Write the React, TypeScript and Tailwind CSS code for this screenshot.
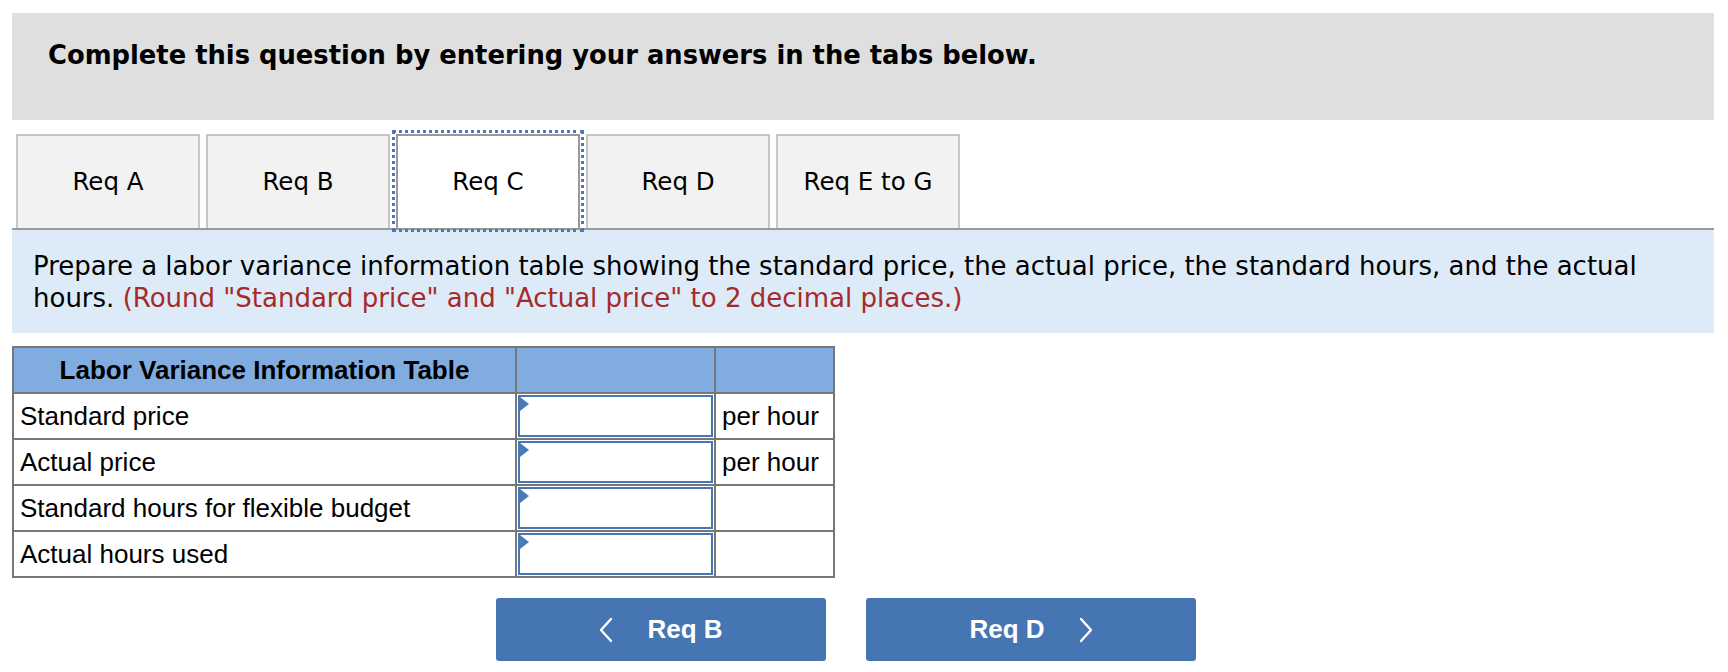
const tabs = ['Req A', 'Req B', 'Req C', 'Req D', 'Req E to G'];

const rows = [
  { label: 'Standard price', unit: 'per hour' },
  { label: 'Actual price', unit: 'per hour' },
  { label: 'Standard hours for flexible budget', unit: '' },
  { label: 'Actual hours used', unit: '' },
];

function AnswerInput() {
  return (
    <div className="relative h-full w-full p-[1px]">
      <input
        type="text"
        className="h-full w-full border-2 border-[#4676b6] bg-white outline-none"
      />
      {/* little flag in the corner */}
      <span className="absolute left-[3px] top-[3px] h-0 w-0 border-y-[7px] border-l-[9px] border-y-transparent border-l-[#4a7ab8]" />
    </div>
  );
}

function Chevron({ dir }: { dir: 'left' | 'right' }) {
  return (
    <svg width="14" height="26" viewBox="0 0 14 26" fill="none" stroke="white" strokeWidth="2.4" strokeLinecap="round" strokeLinejoin="round">
      {dir === 'left' ? <polyline points="12,2 2,13 12,24" /> : <polyline points="2,2 12,13 2,24" />}
    </svg>
  );
}

export default function App() {
  return (
    <div className="min-h-[672px] w-full bg-white font-['DejaVu_Sans',Verdana,sans-serif] text-black">
      <div className="ml-[12px] w-[1702px] pt-[13px]">
        {/* Instruction banner */}
        <div className="h-[107px] bg-[#dfdfdf] pl-[36px] pt-[26px]">
          <p className="text-[25.8px] font-bold leading-[32px]">
            Complete this question by entering your answers in the tabs below.
          </p>
        </div>

        {/* Tabs */}
        <div className="mt-[14px] flex gap-[6px] border-b-2 border-[#999999] pl-[4px]">
          {tabs.map((tab) => {
            const active = tab === 'Req C';
            return (
              <button
                key={tab}
                className={
                  active
                    ? 'flex h-[94px] w-[184px] items-center justify-center border-2 border-b-0 border-[#999999] bg-white text-[24.5px] outline-[3px] outline-offset-[1px] outline-dotted outline-[#4a78b8]'
                    : 'flex h-[94px] w-[184px] items-center justify-center border-2 border-b-0 border-[#c6c6c6] bg-[#f2f2f2] text-[24.5px]'
                }
              >
                {tab}
              </button>
            );
          })}
        </div>

        {/* Question text */}
        <div className="h-[103px] bg-[#ddebf8] pl-[21px] pt-[20px] text-[26px] leading-[32px]">
          Prepare a labor variance information table showing the standard price, the actual price, the standard
          hours, and the actual
          <br />
          hours.{' '}
          <span className="text-[#a52a2a]">
            (Round "Standard price" and "Actual price" to 2 decimal places.)
          </span>
        </div>

        {/* Table */}
        <table className="mt-[13px] border-collapse border-2 border-[#777777] font-['Liberation_Sans',Arial,sans-serif] text-[26px]">
          <thead>
            <tr className="h-[46px] bg-[#80acdf]">
              <th className="w-[503px] border-2 border-[#777777] font-bold">Labor Variance Information Table</th>
              <th className="w-[199px] border-2 border-[#777777]" />
              <th className="w-[119px] border-2 border-[#777777]" />
            </tr>
          </thead>
          <tbody>
            {rows.map((row) => (
              <tr key={row.label} className="h-[46px]">
                <td className="border-2 border-[#777777] px-[6px] text-left">{row.label}</td>
                <td className="h-[46px] border-2 border-[#777777] p-0">
                  <AnswerInput />
                </td>
                <td className="border-2 border-[#777777] px-[6px] text-left">{row.unit}</td>
              </tr>
            ))}
          </tbody>
        </table>

        {/* Navigation */}
        <div className="ml-[484px] mt-[20px] flex gap-[40px] font-['Liberation_Sans',Arial,sans-serif] text-[26px] font-bold text-white">
          <button className="flex h-[63px] w-[330px] items-center justify-center gap-[34px] rounded-[3px] bg-[#4675b3]">
            <Chevron dir="left" />
            <span>Req B</span>
          </button>
          <button className="flex h-[63px] w-[330px] items-center justify-center gap-[34px] rounded-[3px] bg-[#4675b3]">
            <span>Req D</span>
            <Chevron dir="right" />
          </button>
        </div>
      </div>
    </div>
  );
}
